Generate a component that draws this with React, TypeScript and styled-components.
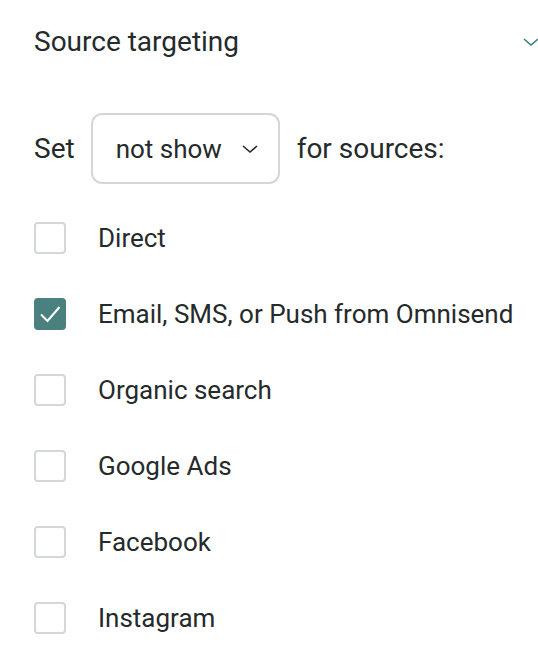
import React, { useState } from 'react';
import styled, { createGlobalStyle } from 'styled-components';

const GlobalStyle = createGlobalStyle`
  body {
    margin: 0;
    background: #ffffff;
    font-family: Roboto, "Liberation Sans", Arial, sans-serif;
    color: #252a2b;
  }
`;

const sources = [
  'Direct',
  'Email, SMS, or Push from Omnisend',
  'Organic search',
  'Google Ads',
  'Facebook',
  'Instagram',
];

const Panel = styled.section`
  width: 538px;
  height: 650px;
  overflow: hidden;
  padding: 0 0 0 34px;
  box-sizing: border-box;
`;

const Header = styled.div`
  display: flex;
  align-items: center;
  justify-content: space-between;
  height: 84px;
`;

const Title = styled.h2`
  margin: 0;
  font-size: 28px;
  font-weight: 400;
  line-height: 30px;
  color: #252a2b;
`;

const Chevron = styled.svg<{ $color?: string }>`
  flex-shrink: 0;
  color: ${p => p.$color || '#252a2b'};
`;

const RuleRow = styled.div`
  display: flex;
  align-items: center;
  gap: 17px;
  margin-top: 29px;
  font-size: 28px;
  line-height: 30px;
`;

const SelectBox = styled.button`
  display: flex;
  align-items: center;
  gap: 19px;
  height: 71px;
  width: 189px;
  margin-left: -1px;
  padding: 0 0 0 23px;
  box-sizing: border-box;
  border: 2px solid #d3d7d7;
  border-radius: 11px;
  background: #fff;
  font: inherit;
  font-size: 26px;
  color: #252a2b;
  cursor: pointer;
`;

const List = styled.ul`
  list-style: none;
  margin: 38px 0 0;
  padding: 0;
  display: flex;
  flex-direction: column;
  gap: 44px;
`;

const Item = styled.li`
  display: flex;
  align-items: center;
  gap: 32px;
  height: 32px;
  line-height: 30px;
  cursor: pointer;
`;

const Box = styled.span<{ $checked: boolean }>`
  width: 32px;
  height: 32px;
  box-sizing: border-box;
  border-radius: 4px;
  border: 2px solid ${p => (p.$checked ? '#4a807d' : '#d3d7d7')};
  background: ${p => (p.$checked ? '#4a807d' : '#fff')};
  display: flex;
  align-items: center;
  justify-content: center;
  flex-shrink: 0;
`;

const Label = styled.span`
  font-size: 26px;
  color: #252a2b;
`;

export default function App() {
  const [checked, setChecked] = useState<string[]>(['Email, SMS, or Push from Omnisend']);
  const toggle = (s: string) =>
    setChecked(c => (c.includes(s) ? c.filter(x => x !== s) : [...c, s]));

  return (
    <>
      <GlobalStyle />
      <Panel>
        <Header>
          <Title>Source targeting</Title>
          <Chevron $color="#3d7d7a" width="18" height="12" viewBox="0 0 18 12" style={{ marginRight: -2 }}>
            <path d="M2 3l7 6 7-6" fill="none" stroke="currentColor" strokeWidth="1.6" />
          </Chevron>
        </Header>
        <RuleRow>
          <span>Set</span>
          <SelectBox type="button">
            not show
            <Chevron width="18" height="12" viewBox="0 0 18 12">
              <path d="M2 3l7 6 7-6" fill="none" stroke="currentColor" strokeWidth="1.6" />
            </Chevron>
          </SelectBox>
          <span>for sources:</span>
        </RuleRow>
        <List>
          {sources.map(s => {
            const on = checked.includes(s);
            return (
              <Item key={s} onClick={() => toggle(s)}>
                <Box $checked={on}>
                  {on && (
                    <svg width="24" height="20" viewBox="0 0 24 20">
                      <path d="M3 10.5l6.5 6.5 12-14" fill="none" stroke="#fff" strokeWidth="2" />
                    </svg>
                  )}
                </Box>
                <Label>{s}</Label>
              </Item>
            );
          })}
        </List>
      </Panel>
    </>
  );
}
